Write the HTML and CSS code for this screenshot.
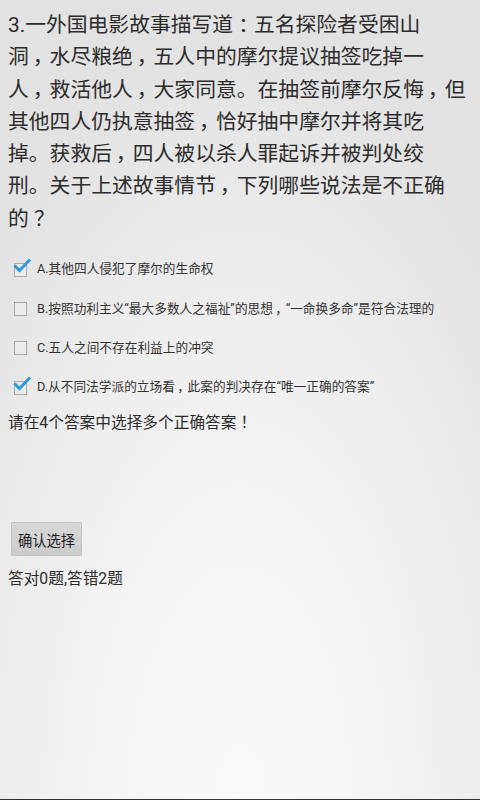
FILE: index.html
```html
<!DOCTYPE html>
<html lang="zh-CN">
<head>
<meta charset="utf-8">
<title>题目</title>
<link rel="stylesheet" href="styles.css">
</head>
<body>
<div class="page">
  <p class="question">3.一外国电影故事描写道<span class="pc">：</span>五名探险者受困山<br>洞<span class="pc">，</span>水尽粮绝<span class="pc">，</span>五人中的摩尔提议抽签吃掉一<br>人<span class="pc">，</span>救活他人<span class="pc">，</span>大家同意。在抽签前摩尔反悔<span class="pc">，</span>但<br>其他四人仍执意抽签<span class="pc">，</span>恰好抽中摩尔并将其吃<br>掉。获救后<span class="pc">，</span>四人被以杀人罪起诉并被判处绞<br>刑。关于上述故事情节<span class="pc">，</span>下列哪些说法是不正确<br>的<span class="pc">？</span></p>

  <ul class="options">
    <li class="option">
      <svg class="cb" viewBox="0 0 24 24" width="24" height="24">
        <rect x="3.5" y="7.5" width="12" height="13" class="cb-box"/>
        <polyline points="4.5,10.5 8.5,14.5 18,4.5" class="cb-check"/>
      </svg>
      <span>A.其他四人侵犯了摩尔的生命权</span>
    </li>
    <li class="option">
      <svg class="cb" viewBox="0 0 24 24" width="24" height="24">
        <rect x="3.5" y="7.5" width="12" height="13" class="cb-box"/>
      </svg>
      <span>B.按照功利主义“最大多数人之福祉”的思想<span class="pc">，</span>“一命换多命”是符合法理的</span>
    </li>
    <li class="option">
      <svg class="cb" viewBox="0 0 24 24" width="24" height="24">
        <rect x="3.5" y="7.5" width="12" height="13" class="cb-box"/>
      </svg>
      <span>C.五人之间不存在利益上的冲突</span>
    </li>
    <li class="option">
      <svg class="cb" viewBox="0 0 24 24" width="24" height="24">
        <rect x="3.5" y="7.5" width="12" height="13" class="cb-box"/>
        <polyline points="4.5,10.5 8.5,14.5 18,4.5" class="cb-check"/>
      </svg>
      <span>D.从不同法学派的立场看<span class="pc">，</span>此案的判决存在“唯一正确的答案”</span>
    </li>
  </ul>

  <p class="prompt">请在4个答案中选择多个正确答案<span class="pc">！</span></p>

  <button class="confirm" type="button">确认选择</button>

  <p class="result">答对0题,答错2题</p>
</div>
</body>
</html>
```

FILE: styles.css
```css
html, body {
  margin: 0;
  padding: 0;
  height: 100%;
}

body {
  background: radial-gradient(ellipse 75% 95% at 50% 100%, #fafafa 0%, #f5f5f5 35%, #ececec 70%, #e2e2e2 100%);
  font-family: Roboto, "Noto Sans CJK SC", sans-serif;
  color: #2c2c2c;
  min-height: 800px;
  box-sizing: border-box;
  border-bottom: 1px solid #333;
}

.page {
  padding: 9px 8px 0 8px;
}

/* full-width punctuation centred in its em cell */
.pc {
  display: inline-block;
  width: 1em;
  text-align: center;
  line-height: 1;
  font-family: "Noto Sans CJK SC", sans-serif;
  font-feature-settings: "palt" 1;
}

.question {
  margin: 0;
  font-size: 20.8px;
  line-height: 32.3px;
  white-space: nowrap;
}

.options {
  list-style: none;
  margin: 13px 0 0 0;
  padding: 0;
}

.option {
  display: flex;
  align-items: center;
  height: 39.3px;
  font-size: 12.7px;
  color: #333;
  white-space: nowrap;
}

.cb {
  flex: none;
  margin-left: 3px;
  margin-right: 2px;
}

.cb-box {
  fill: #ebebeb;
  stroke: #a9a9a9;
  stroke-width: 1;
}

.cb-check {
  fill: none;
  stroke: #2f9bd8;
  stroke-width: 3;
  stroke-linecap: square;
  stroke-linejoin: miter;
}

.prompt {
  margin: 7px 0 0 0;
  font-size: 15.7px;
  line-height: 22px;
}

.confirm {
  display: block;
  margin: 88px 0 0 3px;
  width: 71px;
  height: 34px;
  padding: 0;
  border: 1px solid #c2c2c2;
  border-radius: 1px;
  background: linear-gradient(#d8d8d8, #cbcbcb);
  font-family: Roboto, "Noto Sans CJK SC", sans-serif;
  font-size: 14.3px;
  color: #222;
}

.result {
  margin: 12px 0 0 0;
  font-size: 15.7px;
  line-height: 22px;
}
```
